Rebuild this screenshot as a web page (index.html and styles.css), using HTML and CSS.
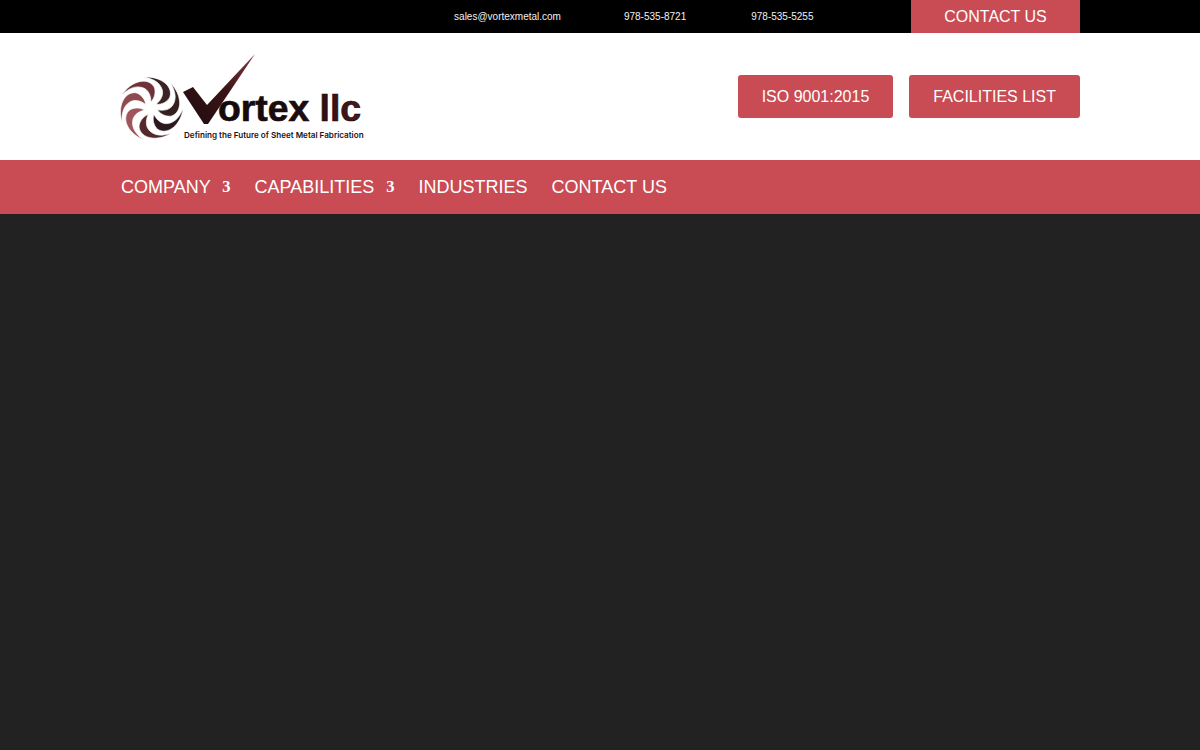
FILE: index.html
```html
<!DOCTYPE html>
<html lang="en">
<head>
    <meta charset="UTF-8">
    <meta name="viewport" content="width=device-width, initial-scale=1.0">
    <title>Vortex llc</title>
    <link rel="stylesheet" href="styles.css">
</head>
<body>
    <div class="top-bar">
        <div class="container top-inner">
            <span class="top-item">sales@vortexmetal.com</span>
            <span class="top-item">978-535-8721</span>
            <span class="top-item top-fax">978-535-5255</span>
            <a class="top-contact" href="#">CONTACT US</a>
        </div>
    </div>
    <header class="site-header">
        <div class="container header-inner">
            <a class="logo" href="#">
                <svg width="250" height="92" viewBox="120 50 250 92">
                    <defs>
                        <linearGradient id="checkFill" x1="0" y1="1" x2="1" y2="0">
                            <stop offset="0" stop-color="#1c0c0e"/>
                            <stop offset="0.55" stop-color="#3d1418"/>
                            <stop offset="1" stop-color="#8a3a40"/>
                        </linearGradient>
                        <linearGradient id="wordFill" x1="0" y1="0" x2="1" y2="0">
                            <stop offset="0" stop-color="#140a0b"/>
                            <stop offset="0.6" stop-color="#1d0b0d"/>
                            <stop offset="1" stop-color="#4a1a1e"/>
                        </linearGradient>
                        <path id="blade" d="M32 0C30 16 17 27 7 21C3 18 1 11 3 6C6 12 11 16 17 15C24 14 29 8 32 0Z"/>
                    </defs>
                    <g class="swirl" transform="translate(151 107.5)">
                        <use href="#blade" fill="#8f4a50" transform="rotate(154)"/>
                        <use href="#blade" fill="#6e3238" transform="rotate(206)"/>
                        <use href="#blade" fill="#3a2225" transform="rotate(257)"/>
                        <use href="#blade" fill="#33201f" transform="rotate(308)"/>
                        <use href="#blade" fill="#2a1a1d" transform="rotate(0)"/>
                        <use href="#blade" fill="#54292e" transform="rotate(51)"/>
                        <use href="#blade" fill="#a0555c" transform="rotate(103)"/>
                    </g>
                    <polygon fill="url(#checkFill)" points="183,91 193,86 207,104 255,53 208,123 204,123"/>
                    <text class="logo-word" x="218" y="120" fill="url(#wordFill)">ortex llc</text>
                    <text class="logo-tag" x="184" y="137">Defining the Future of Sheet Metal Fabrication</text>
                </svg>
            </a>
            <div class="header-btns">
                <a class="btn" href="#">ISO 9001:2015</a>
                <a class="btn" href="#">FACILITIES LIST</a>
            </div>
        </div>
    </header>
    <nav class="main-nav">
        <div class="container nav-inner">
            <a class="nav-link" href="#">COMPANY <span class="caret">3</span></a>
            <a class="nav-link" href="#">CAPABILITIES <span class="caret">3</span></a>
            <a class="nav-link" href="#">INDUSTRIES</a>
            <a class="nav-link" href="#">CONTACT US</a>
        </div>
    </nav>
</body>
</html>
```

FILE: styles.css
```css
body {
    font-family: 'Liberation Sans', Arial, sans-serif;
    margin: 0;
    min-height: 750px;
    background-color: #222;
    color: white;
}
a {
    color: white;
    text-decoration: none;
}
.container {
    width: 960px;
    margin: 0 auto;
}
.top-bar {
    background-color: #000;
    height: 33px;
}
.top-inner {
    display: flex;
    justify-content: flex-end;
    align-items: center;
    height: 100%;
    gap: 63px;
}
.top-item {
    font-size: 10px;
    color: #f0f0f0;
}
.top-fax {
    margin-left: 2px;
}
.top-contact {
    background-color: #c94b53;
    font-size: 16px;
    width: 169px;
    height: 33px;
    line-height: 33px;
    text-align: center;
    margin-left: 34.5px;
}
.site-header {
    background-color: white;
    height: 127px;
}
.header-inner {
    display: flex;
    justify-content: space-between;
    align-items: center;
    height: 100%;
}
.logo {
    display: block;
    height: 92px;
}
.swirl use {
    stroke: white;
    stroke-width: 0.6;
}
.logo-word {
    font-weight: bold;
    font-size: 37.3px;
    stroke: #1d0b0d;
    stroke-width: 0.7;
}
.logo-tag {
    font-family: 'Inter', sans-serif;
    font-weight: 600;
    font-size: 8.1px;
    fill: #1c1214;
}
.header-btns {
    display: flex;
    gap: 16px;
}
.btn {
    background-color: #c94b53;
    border-radius: 3px;
    font-size: 16px;
    line-height: 43px;
    padding: 0 24px;
}
.main-nav {
    background-color: #c94b53;
    height: 54px;
}
.nav-inner {
    display: flex;
    align-items: center;
    gap: 24px;
    height: 100%;
    padding-left: 1px;
    box-sizing: border-box;
}
.nav-link {
    font-size: 18px;
}
.caret {
    font-family: 'Liberation Serif', serif;
    font-weight: bold;
    font-size: 16.5px;
    margin-left: 7px;
    vertical-align: 1px;
}
```
